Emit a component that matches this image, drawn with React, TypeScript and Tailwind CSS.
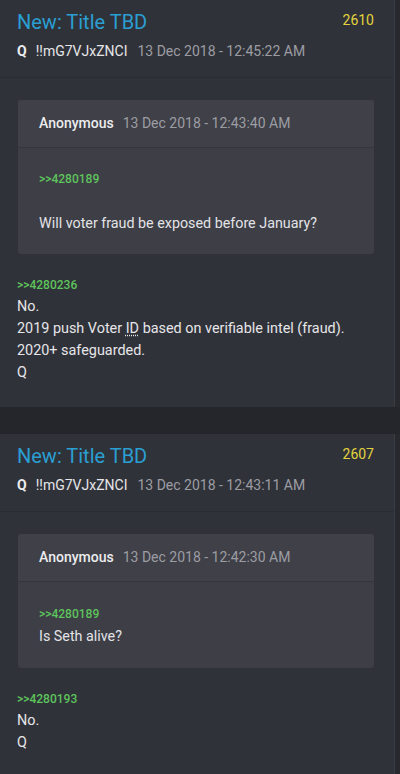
const font = { fontFamily: "Roboto, 'Noto Sans', sans-serif" };

interface Post {
  num: string;
  time: string;
  quoteTime: string;
  quoteRef: string;
  quoteText: string;
  quoteGap: string;
  quoteTop: string;
  reply: string;
  lines: React.ReactNode[];
}

const posts: Post[] = [
  {
    num: "2610",
    time: "13 Dec 2018 - 12:45:22 AM",
    quoteTime: "13 Dec 2018 - 12:43:40 AM",
    quoteRef: ">>4280189",
    quoteText: "Will voter fraud be exposed before January?",
    quoteGap: "mt-[26px]",
    quoteTop: "pt-[23px] pb-[21px]",
    reply: ">>4280236",
    lines: [
      "No.",
      <>2019 push Voter <span className="underline decoration-dotted underline-offset-2">ID</span> based on verifiable intel (fraud).</>,
      "2020+ safeguarded.",
      "Q",
    ],
  },
  {
    num: "2607",
    time: "13 Dec 2018 - 12:43:11 AM",
    quoteTime: "13 Dec 2018 - 12:42:30 AM",
    quoteRef: ">>4280189",
    quoteText: "Is Seth alive?",
    quoteGap: "mt-[4px]",
    quoteTop: "pt-[24px] pb-[22px]",
    reply: ">>4280193",
    lines: ["No.", "Q"],
  },
];

function PostCard({ p }: { p: Post }) {
  return (
    <div className="w-[395px] bg-[#30323a] border-r border-[#3a3c44]">
      <div className="pt-[8px] pb-[16px] pl-[17px] pr-[20px] border-b border-[#2a2c33]">
        <div className="flex items-start justify-between">
          <div className="text-[20px] leading-[28px] text-[#2a9fd2]">New: Title TBD</div>
          <div className="text-[14px] leading-[24px] text-[#e2d43c]">{p.num}</div>
        </div>
        <div className="mt-[5px] text-[14px] leading-[20px] flex items-center">
          <span className="font-bold text-[#ececee]">Q</span>
          <span className="ml-[9px] text-[#e6e6e8]">!!mG7VJxZNCI</span>
          <span className="ml-[10px] text-[#9c9da2]">{p.time}</span>
        </div>
      </div>
      <div className="pt-[22px] pb-[23px] pl-[17px] pr-[20px]">
        <div className="ml-[1px] rounded-[3px] bg-[#3d3e46] overflow-hidden">
          <div className="h-[48px] px-[21px] flex items-center bg-[#3f4048] border-b border-[#35363d] text-[14px]">
            <span className="font-medium text-[#ececee]">Anonymous</span>
            <span className="ml-[9px] text-[#9c9da2]">{p.quoteTime}</span>
          </div>
          <div className={`px-[21px] ${p.quoteTop}`}>
            <div className="text-[12px] leading-[16px] font-medium text-[#5ec45b]">{p.quoteRef}</div>
            <div className={`${p.quoteGap} text-[14.3px] leading-[20px] text-[#e3e3e6]`}>{p.quoteText}</div>
          </div>
        </div>
        <div className="mt-[23px] text-[12px] leading-[16px] font-medium text-[#5ec45b]">{p.reply}</div>
        <div className="mt-[3px] text-[14.4px] leading-[22px] text-[#e6e6e8]">
          {p.lines.map((l, i) => (
            <div key={i}>{l}</div>
          ))}
        </div>
      </div>
    </div>
  );
}

export default function App() {
  return (
    <div className="w-[400px] h-[774px] overflow-hidden bg-[#27292f]" style={font}>
      <PostCard p={posts[0]} />
      <div className="h-[27px] bg-[#24262c]" />
      <PostCard p={posts[1]} />
    </div>
  );
}
